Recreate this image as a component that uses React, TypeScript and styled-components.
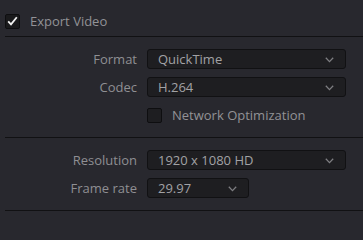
import { FC } from 'react';
import styled, { createGlobalStyle } from 'styled-components';

const GlobalStyle = createGlobalStyle`
	html, body {
		margin: 0;
		padding: 0;
		background: #28282e;
	}
	body {
		font-family: 'Open Sans', 'Liberation Sans', sans-serif;
		font-size: 13px;
		color: #929296;
	}
`;

const Panel = styled.div`
	width: 363px;
	height: 214px;
	padding-left: 5px;
	box-sizing: border-box;
	background: #28282e;
	overflow: hidden;
`;

const Header = styled.div`
	display: flex;
	align-items: center;
	gap: 10px;
	height: 37px;
	padding-top: 6px;
	box-sizing: border-box;
	border-bottom: 1px solid #111113;
`;

const Section = styled.div`
	display: grid;
	grid-template-columns: 132px auto;
	grid-auto-rows: 20px;
	column-gap: 10px;
	row-gap: 8px;
	padding: 12px 0;
	border-bottom: 1px solid #111113;
	align-items: center;
	justify-items: start;
`;

const Label = styled.span`
	justify-self: end;
	height: 20px;
	line-height: 19px;
	padding-top: 1px;
	box-sizing: border-box;
	color: #8f8f93;
	white-space: nowrap;
`;

const Box = styled.span<{ checked?: boolean }>`
	display: inline-flex;
	align-items: center;
	justify-content: center;
	width: 15px;
	height: 15px;
	box-sizing: border-box;
	border: 1px solid #0e0e10;
	border-radius: 2px;
	background: ${({ checked }) => (checked ? '#1a1a1c' : '#1e1e21')};
	flex-shrink: 0;
`;

const CheckRow = styled.div`
	display: flex;
	align-items: center;
	gap: 10px;
	height: 20px;
	grid-column: 2;
	color: #929296;
`;

const Select = styled.div<{ width: number }>`
	display: flex;
	align-items: center;
	justify-content: space-between;
	width: ${({ width }) => width}px;
	height: 20px;
	box-sizing: border-box;
	padding: 1px 11px 0 10px;
	background: #1e1e21;
	border: 1px solid #111113;
	border-radius: 3px;
	color: #a2a2a5;
	line-height: 17px;
`;

const Chevron: FC = () => (
	<svg width="9" height="6" viewBox="0 0 9 6">
		<path d="M0.8 0.8 L4.5 4.6 L8.2 0.8" fill="none" stroke="#7e7e82" strokeWidth="1.3" />
	</svg>
);

const Check: FC = () => (
	<svg width="11" height="10" viewBox="0 0 11 10">
		<path d="M1.2 5.4 L4 8.4 L9.8 1.2" fill="none" stroke="#f2f2f2" strokeWidth="1.8" />
	</svg>
);

const Dropdown: FC<{ value: string; width: number }> = ({ value, width }) => (
	<Select width={width}>
		<span>{value}</span>
		<Chevron />
	</Select>
);

export default function App() {
	return (
		<>
			<GlobalStyle />
			<Panel>
				<Header>
					<Box checked>
						<Check />
					</Box>
					<span>Export Video</span>
				</Header>
				<Section>
					<Label>Format</Label>
					<Dropdown value="QuickTime" width={199} />
					<Label>Codec</Label>
					<Dropdown value="H.264" width={199} />
					<CheckRow>
						<Box />
						<span>Network Optimization</span>
					</CheckRow>
				</Section>
				<Section>
					<Label>Resolution</Label>
					<Dropdown value="1920 x 1080 HD" width={199} />
					<Label>Frame rate</Label>
					<Dropdown value="29.97" width={102} />
				</Section>
			</Panel>
		</>
	);
}
